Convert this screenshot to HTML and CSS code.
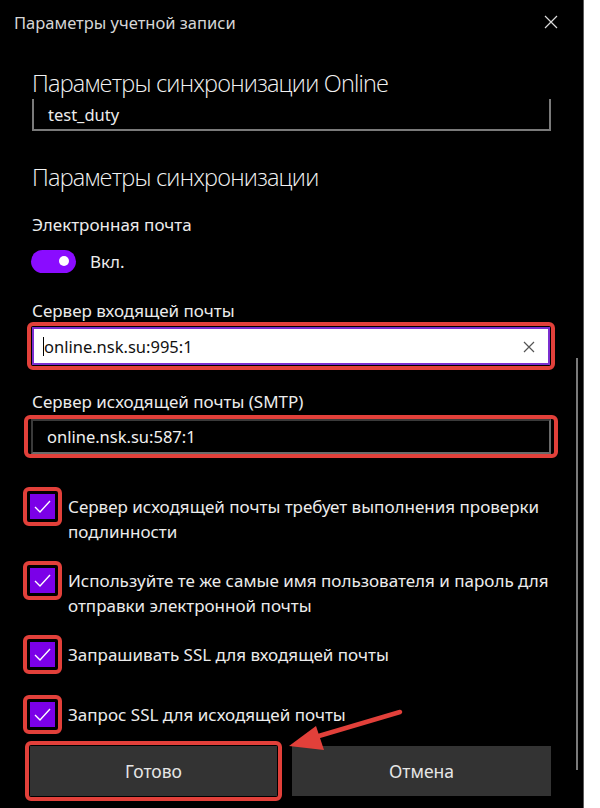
FILE: index.html
```html
<!DOCTYPE html>
<html>
<head>
  <meta charset="utf-8">
  <title>Параметры учетной записи</title>
  <link rel="stylesheet" href="styles.css">
</head>
<body>
  <div class="dialog">
    <div class="titlebar">
      <span>Параметры учетной записи</span>
      <svg class="close" width="14" height="14" viewBox="0 0 14 14">
        <path d="M1 1 L13 13 M13 1 L1 13" stroke="#dcdcdc" stroke-width="1.2" fill="none"/>
      </svg>
    </div>

    <div class="content">
      <h2 class="heading first">Параметры синхронизации Online</h2>
      <div class="field cut">test_duty</div>

      <h2 class="heading second">Параметры синхронизации</h2>

      <div class="label email-label">Электронная почта</div>
      <div class="toggle-row">
        <span class="toggle"><span class="knob"></span></span>
        <span>Вкл.</span>
      </div>

      <div class="label server-label">Сервер входящей почты</div>
      <div class="mark mark-in">
        <div class="field focused">
          <span class="caret"></span>online.nsk.su:995:1
          <svg class="clear" width="12" height="12" viewBox="0 0 12 12">
            <path d="M1 1 L11 11 M11 1 L1 11" stroke="#555" stroke-width="1.2" fill="none"/>
          </svg>
        </div>
      </div>

      <div class="label smtp-label">Сервер исходящей почты (SMTP)</div>
      <div class="mark mark-out">
        <div class="field dark">online.nsk.su:587:1</div>
      </div>

      <div class="checks">
        <div class="check-row">
          <span class="mark box-mark"><span class="box"><svg width="25" height="25" viewBox="0 0 25 25"><path d="M5 13 L10 18 L20 7" stroke="#fff" stroke-width="1.4" fill="none"/></svg></span></span>
          <span class="check-text">Сервер исходящей почты требует выполнения проверки подлинности</span>
        </div>
        <div class="check-row">
          <span class="mark box-mark"><span class="box"><svg width="25" height="25" viewBox="0 0 25 25"><path d="M5 13 L10 18 L20 7" stroke="#fff" stroke-width="1.4" fill="none"/></svg></span></span>
          <span class="check-text">Используйте те же самые имя пользователя и пароль для отправки электронной почты</span>
        </div>
        <div class="check-row">
          <span class="mark box-mark"><span class="box"><svg width="25" height="25" viewBox="0 0 25 25"><path d="M5 13 L10 18 L20 7" stroke="#fff" stroke-width="1.4" fill="none"/></svg></span></span>
          <span class="check-text">Запрашивать SSL для входящей почты</span>
        </div>
        <div class="check-row last">
          <span class="mark box-mark"><span class="box"><svg width="25" height="25" viewBox="0 0 25 25"><path d="M5 13 L10 18 L20 7" stroke="#fff" stroke-width="1.4" fill="none"/></svg></span></span>
          <span class="check-text">Запрос SSL для исходящей почты</span>
        </div>
      </div>

      <div class="buttons">
        <div class="mark btn-mark"><button class="btn">Готово</button></div>
        <button class="btn">Отмена</button>
      </div>
    </div>

    <div class="scrollbar"></div>

    <!-- red annotation arrow -->
    <svg class="arrow" width="600" height="808" viewBox="0 0 600 808">
      <path d="M400 712 L312 738" stroke="#e2403a" stroke-width="4.5" stroke-linecap="round" fill="none"/>
      <path d="M289 746 L316 726 L324 750 Z" fill="#e2403a"/>
    </svg>
  </div>
</body>
</html>
```

FILE: styles.css
```css
body {
  margin: 0;
  background: #fff;
  font-family: "Noto Sans", "Open Sans", sans-serif;
}
.dialog {
  position: relative;
  width: 583px;
  height: 808px;
  background: #000;
  border-right: 1px solid #5c5c5c;
  color: #ececec;
  overflow: hidden;
}
.titlebar {
  height: 44px;
  display: flex;
  align-items: center;
  justify-content: space-between;
  padding: 0 25px 0 14px;
  font-size: 16.5px;
  color: #d6d6d6;
}
.content {
  padding: 0 32px;
}
.heading {
  margin: 0;
  font-family: "Open Sans", sans-serif;
  font-weight: 300;
  font-size: 23.5px;
  letter-spacing: -0.8px;
  line-height: 32px;
  color: #f2f2f2;
}
.heading.first {
  margin-top: 23px;
}
.heading.second {
  margin-top: 30px;
}
.field {
  display: flex;
  align-items: center;
  box-sizing: border-box;
  font-size: 16.5px;
  position: relative;
}
.field.cut {
  height: 32px;
  padding-left: 14px;
  border: 2px solid #7a7a7a;
  border-top: none;
}
.label {
  font-size: 17px;
  line-height: 20px;
}
.email-label {
  margin-top: 22px;
}
.toggle-row {
  display: flex;
  align-items: center;
  gap: 14px;
  margin-top: 14px;
  height: 24px;
  font-size: 17px;
}
.toggle {
  width: 45px;
  height: 23px;
  border-radius: 12px;
  background: #8a0cff;
  display: flex;
  align-items: center;
  justify-content: flex-end;
  padding-right: 7px;
  box-sizing: border-box;
  margin-left: -1px;
}
.knob {
  width: 10px;
  height: 10px;
  border-radius: 50%;
  background: #fff;
}
.server-label {
  margin-top: 28px;
}
.smtp-label {
  margin-top: 22px;
}
.mark {
  border: 4px solid #e2403a;
  border-radius: 6px;
  padding: 1px;
}
.mark-in {
  margin: 1px -4px 0 -5px;
}
.mark-out {
  margin: 3px -7px 0 -8px;
  padding: 0 3px;
}
.field.focused {
  height: 38px;
  background: #fff;
  color: #111;
  border: 2px solid #7b2fd0;
  padding-left: 9px;
}
.caret {
  width: 1px;
  height: 19px;
  background: #000;
}
.clear {
  position: absolute;
  right: 13px;
  top: 12px;
}
.field.dark {
  height: 35px;
  background: #000;
  color: #f0f0f0;
  border: 2px solid #6a6a6a;
  border-top-color: #3a3a3a;
  border-left-color: #3a3a3a;
  padding-left: 14px;
}
.checks {
  margin-top: 29px;
  margin-right: -14px;
  display: flex;
  flex-direction: column;
  gap: 17px;
}
.check-row {
  display: flex;
  align-items: flex-start;
}
.check-row.last {
  margin-top: 4px;
}
.box-mark {
  padding: 3px;
  margin-left: -9px;
  flex-shrink: 0;
}
.box {
  display: block;
  width: 25px;
  height: 25px;
  background: #7b00e8;
}
.box svg {
  display: block;
}
.check-text {
  margin-left: 6px;
  padding-top: 7px;
  font-size: 17px;
  line-height: 25px;
}
.buttons {
  margin-top: 7px;
  display: flex;
  align-items: center;
  gap: 10px;
}
.btn-mark {
  flex: 1;
  margin-left: -7px;
  padding: 1px;
}
.btn {
  display: block;
  width: 100%;
  height: 50px;
  border: none;
  background: #333;
  color: #e6e6e6;
  font-family: "Noto Sans", sans-serif;
  font-size: 17.5px;
}
.buttons > .btn {
  flex: 1;
}
.scrollbar {
  position: absolute;
  left: 576px;
  top: 358px;
  width: 2px;
  height: 412px;
  background: #7a7a7a;
}
.arrow {
  position: absolute;
  left: 0;
  top: 0;
  pointer-events: none;
}
```
